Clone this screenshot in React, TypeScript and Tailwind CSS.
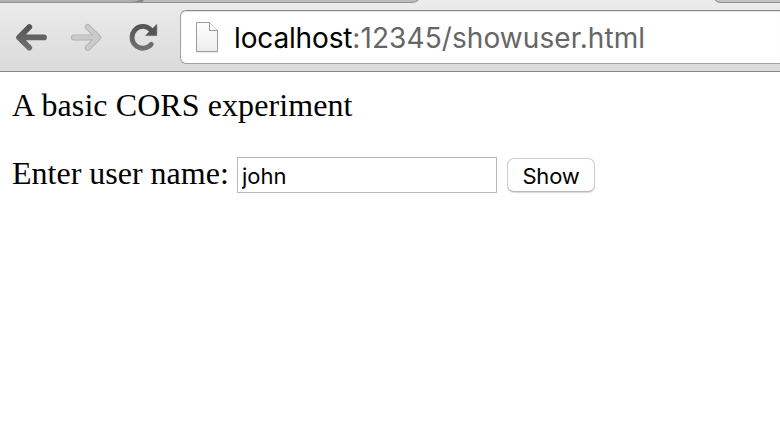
import React from "react";

function TabStrip() {
  return (
    <svg className="block h-[10px] w-full shrink-0" viewBox="0 0 780 10" fill="none">
      <path d="M0 0H419C417 1.5 416 2 413 2H0Z" fill="#b0b0b0" />
      <path d="M138 0H419C417 1.5 416 2 413 2H130C135 2 137 1 138 0Z" fill="#bbbbbb" />
      <path d="M129 2C134 1.8 137 1.5 139 0H144L142 2Z" fill="#858585" />
      <path d="M0 2.5H412Q416 2.5 418 0" stroke="#929292" />
      <path d="M715 0H780V2.5H720Q717 2.5 715 0Z" fill="#c3c3c3" />
      <path d="M715 0Q717 2.5 720 2.5H780" stroke="#929292" />
    </svg>
  );
}

function BackIcon() {
  return (
    <svg className="h-[30px] w-[34px]" viewBox="0 0 34 30" fill="none">
      <path d="M30 15.4H6M15.3 5L5 15.4L15.3 25.8" stroke="url(#dark)" strokeWidth="5.7" strokeLinecap="round" strokeLinejoin="round" />
      <defs>
        <linearGradient id="dark" x1="0" y1="0" x2="0" y2="30" gradientUnits="userSpaceOnUse">
          <stop stopColor="#505050" />
          <stop offset="1" stopColor="#747474" />
        </linearGradient>
      </defs>
    </svg>
  );
}

function ForwardIcon() {
  return (
    <svg className="h-[30px] w-[34px]" viewBox="0 0 34 30" fill="none" strokeLinecap="round" strokeLinejoin="round">
      <path d="M4.8 15.4H28M18.8 5L29.2 15.4L18.8 25.8" stroke="#b0b0b0" strokeWidth="6" />
      <path d="M4.8 15.4H28M18.8 5L29.2 15.4L18.8 25.8" stroke="#cacaca" strokeWidth="4.2" />
    </svg>
  );
}

function ReloadIcon() {
  return (
    <svg className="h-[30px] w-[30px]" viewBox="0 0 30 30" fill="none">
      <path d="M22.7 7.7A10.9 10.9 0 1 0 23.3 22.3" stroke="url(#dark)" strokeWidth="4.8" strokeLinecap="round" />
      <path d="M28.8 2.4V13.6H17.6L21.4 9.6L20.4 6L24.6 6.4Z" fill="#555555" stroke="#555555" strokeWidth=".5" strokeLinejoin="round" />
    </svg>
  );
}

function PageIcon() {
  return (
    <svg className="h-8 w-6 shrink-0" viewBox="0 0 24 32" fill="none">
      <path d="M1 31.5H23" stroke="#ededed" />
      <path d="M1.5 1.5H14.5L22.5 9.5V30.5H1.5Z" fill="url(#paper)" stroke="#9b9b9b" />
      <path d="M14.5 1.5V9.5H22.5" fill="#fff" stroke="#9b9b9b" />
      <defs>
        <linearGradient id="paper" x1="0" y1="0" x2="0" y2="1">
          <stop stopColor="#ffffff" />
          <stop offset="1" stopColor="#ededed" />
        </linearGradient>
      </defs>
    </svg>
  );
}

export default function App() {
  return (
    <div className="flex h-[432px] w-[780px] flex-col overflow-hidden bg-white text-black">
      <header className="flex h-[72px] shrink-0 flex-col border-b border-[#858585] bg-linear-to-b from-[#ececec] to-[#dadada]">
        <TabStrip />
        <div className="flex">
          <nav className="flex h-[54px] w-[180px] shrink-0 items-center pl-[14px]">
            <BackIcon />
            <span className="ml-[21px] flex"><ForwardIcon /></span>
            <span className="ml-[25px] flex"><ReloadIcon /></span>
          </nav>
          <div className="flex h-[54px] flex-1 items-center rounded-l-[6px] border border-r-0 border-t-[#888888] border-b-[#a0a0a0] border-l-[#a0a0a0] bg-white pl-[14px] shadow-[inset_0_1px_1px_#e4e4e4]">
            <PageIcon />
            <span className="ml-[15px] whitespace-nowrap pt-px font-['Inter',sans-serif] text-[28px] leading-[36px] tracking-[0.09px] text-[#666666]">
              <span className="tracking-[-0.15px] text-black">localhost</span>:12345/showuser.html
            </span>
          </div>
        </div>
      </header>
      <main className="pl-3 pt-[15px] font-['Liberation_Serif',serif] text-[32px] leading-[37px]">
        <p className="tracking-[0.08px]">A basic CORS experiment</p>
        <div className="mt-[33px] flex h-[36px] items-start">
          <label htmlFor="user" className="w-[225px] shrink-0 whitespace-nowrap leading-[32px]">Enter user name:</label>
          <input id="user" defaultValue="john" className="h-[36px] w-[260px] rounded-none border border-[#b8b8b8] bg-white px-[4px] pt-[2px] font-['Inter',sans-serif] text-[22px] leading-[32px] outline-none" />
          <button className="ml-[10px] mt-px h-[34px] w-[88px] rounded-[7px] border border-[#cfcfcf] border-b-[#b8b8b8] bg-white pt-px font-['Inter',sans-serif] text-[22px] leading-[30px] tracking-[-0.2px] shadow-[0_1px_1px_#d8d8d8]">Show</button>
        </div>
      </main>
    </div>
  );
}
